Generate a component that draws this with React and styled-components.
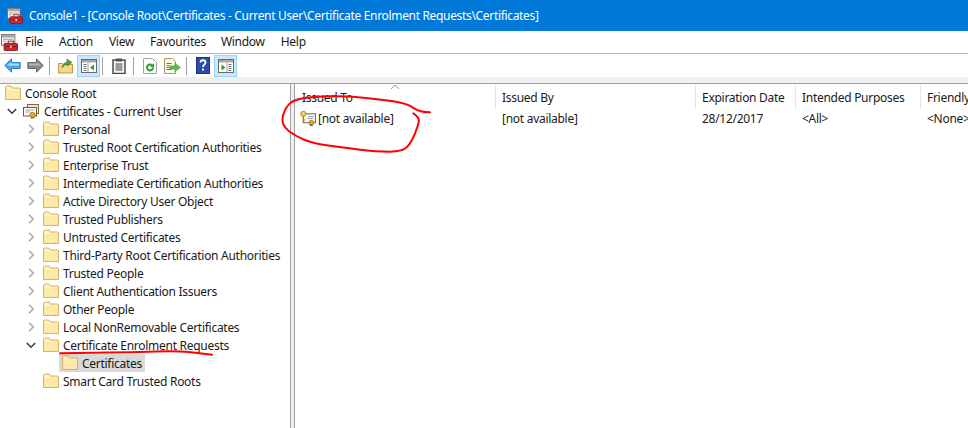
import React from "react";
import styled, { createGlobalStyle } from "styled-components";

const Global = createGlobalStyle`
  html, body { margin: 0; padding: 0; background: #fff; }
  body { font-family: "Noto Sans", "Open Sans", sans-serif; font-size: 12px; letter-spacing: -0.28px; color: #1a1a1a; }
`;
const Window = styled.div`
  position: relative; width: 968px; height: 428px; overflow: hidden;
  display: flex; flex-direction: column; background: #fff;
`;
const TitleBar = styled.div`
  height: 31px; background: #0078d7; color: #fff; display: flex; align-items: center;
  padding-left: 7px; gap: 6px; flex: none; letter-spacing: -0.33px;
`;
const MenuBar = styled.div`
  height: 22px; display: flex; align-items: center; flex: none; box-sizing: content-box;
  border-bottom: 1px solid #b4b4bc; background: #fff;
`;
const MenuIcon = styled.div` width: 25px; padding-left: 1px; display: flex; box-sizing: border-box; `;
const MenuItem = styled.span` margin-right: ${p => p.$gap}px; position: relative; top: -1px; `;
const Toolbar = styled.div`
  height: 23px; display: flex; align-items: center; padding-left: 1px; flex: none; background: #fff;
`;
const ToolButton = styled.div`
  width: 23px; height: 22px; display: flex; align-items: center; justify-content: center;
  box-sizing: border-box; flex: none;
  ${p => p.$active && "background: #cce8ff; border: 1px solid #99d1ff;"}
`;
const ToolSep = styled.div` width: 1px; height: 18px; background: #a0a0a0; margin: 0 ${p => p.$r}px 0 ${p => p.$l}px; flex: none; `;
const Strip = styled.div` height: 6px; background: #f0f0f0; flex: none; border-bottom: 1px solid #a0a0a0; `;
const Panes = styled.div` flex: 1; display: flex; min-height: 0; `;
const TreePane = styled.div`
  width: 291px; flex: none; border-right: 1px solid #a0a0a0; box-sizing: border-box;
`;
const Splitter = styled.div` width: 3px; background: #f0f0f0; flex: none; `;
const ListPane = styled.div` flex: 1; border-left: 1px solid #a0a0a0; min-width: 0; overflow: hidden; `;
const TreeRow = styled.div`
  height: 18px; display: flex; align-items: center; padding-left: ${p => p.$indent}px; white-space: nowrap;
`;
const Twisty = styled.div`
  width: 17px; height: 18px; margin-right: ${p => p.$gap}px;
  display: flex; align-items: center; justify-content: center; flex: none;
`;
const NodeIcon = styled.div` width: 16px; height: 16px; flex: none; margin-right: ${p => p.$gap}px; display: flex; `;
const SelectedNode = styled.div`
  display: flex; align-items: center; height: 18px; width: 86px; background: #d9d9d9; padding-left: 3px; box-sizing: border-box;
`;
const ColGrid = styled.div`
  display: grid; grid-template-columns: 201px 200px 100px 125px 60px; width: 673px;
`;
const HeaderCell = styled.div`
  height: 25px; display: flex; align-items: center; box-sizing: border-box; padding: 1px 0 0 ${p => p.$pad || 6}px;
  border-right: 1px solid #e5e5e5; white-space: nowrap; position: relative; overflow: hidden;
`;
const DataCell = styled.div`
  height: 18px; display: flex; align-items: center; padding-left: ${p => p.$pad || 6}px; white-space: nowrap; overflow: hidden;
`;
const Overlay = styled.svg` position: absolute; left: 0; top: 0; pointer-events: none; `;
const SortArrow = styled.svg` position: absolute; left: 95px; top: 0; `;

const Folder = () => (
  <svg width="16" height="16" viewBox="0 0 16 16">
    <path d="M.5 14.500V2l1-1h4.500l1.500 2h7.500l.5.5v11z" fill="#fbe5a0" stroke="#d3b56c" />
    <path d="M1.500 2h4.200l1.300 2h7v1H1.500z" fill="#fdf3cc" />
    <path d="M1.500 5.500h13v8h-13z" fill="#fce9ab" />
  </svg>
);
const Chevron = ({ open }) => (
  <svg width="10" height="10" viewBox="0 0 10 10">
    {open
      ? <path d="M.8 3l4.200 4.200L9.200 3" fill="none" stroke="#404040" strokeWidth="1.600" />
      : <path d="M3 .8L7.200 5 3 9.200" fill="none" stroke="#a6a6a6" strokeWidth="1.500" />}
  </svg>
);
const CertStore = () => (
  <svg width="16" height="16" viewBox="0 0 16 16">
    <rect x="4.500" y="1.500" width="11" height="9" fill="#efe8d0" stroke="#7a6a48" />
    <rect x=".5" y="4.500" width="13" height="8.500" fill="#fffdf2" stroke="#6b5b3c" />
    <path d="M2.500 7h9M2.500 9h5" stroke="#8ca6c8" />
    <circle cx="9.500" cy="12" r="2.600" fill="#f0a818" stroke="#b47a10" />
    <path d="M8.300 14l-.5 2 1.700-1 1.700 1-.5-2" fill="#2a6fc0" />
  </svg>
);
const PendingCert = () => (
  <svg width="17" height="17" viewBox="0 0 17 17">
    <rect x="3.500" y="3.500" width="13" height="9.500" fill="#fbf8e8" stroke="#6b5b3c" />
    <path d="M8 6.500h7M8 8.500h6" stroke="#8ca6c8" />
    <circle cx="3.500" cy="3.500" r="2.700" fill="#f6d468" stroke="#a8841c" />
    <path d="M3.500 6v7M3.500 10h2M3.500 12.500h2" stroke="#a8841c" />
    <circle cx="12" cy="13" r="2.500" fill="#f0a818" stroke="#b47a10" />
    <path d="M10.800 15l-.3 2 1.500-.9 1.500.9-.3-2" fill="#2a6fc0" />
  </svg>
);
const SnapIn = ({ size }) => (
  <svg width={size} height={size} viewBox="0 0 19 19">
    <rect x=".5" y=".5" width="15" height="12" fill="#f4f4f4" stroke="#6a6a6a" />
    <rect x="1" y="1" width="14" height="3" fill="#a8a8a8" />
    <path d="M2.500 6h11M2.500 8h3" stroke="#9a9a9a" />
    <rect x="3.500" y="10.500" width="15" height="8" rx="1" fill="#d2262c" stroke="#8a1418" />
    <path d="M4 14h14" stroke="#8a1418" />
    <rect x="8" y="8" width="6" height="2.500" fill="#f4f4f4" stroke="#8a1418" />
    <rect x="10" y="13" width="2" height="2.500" fill="#f4d0d0" />
  </svg>
);
const ArrowLeft = () => (
  <svg width="17" height="15" viewBox="0 0 17 15">
    <path d="M.8 7.500L7.500.8v3.700h8.700v6H7.500v3.700z" fill="#4aa8ea" stroke="#2a82c8" strokeLinejoin="round" />
    <path d="M3 7.500l4-3.500v1.600h8v1.900z" fill="#a8def8" />
  </svg>
);
const ArrowRight = () => (
  <svg width="17" height="15" viewBox="0 0 17 15">
    <path d="M16.200 7.500L9.500.8v3.700H.8v6h8.700v3.700z" fill="#888" stroke="#6a6a6a" strokeLinejoin="round" />
    <path d="M14 7.500l-4-3.500v1.600H2v1.900z" fill="#b4b4b4" />
  </svg>
);
const UpFolder = () => (
  <svg width="15" height="17" viewBox="0 0 15 17">
    <path d="M.5 16V6.500h4l1 1h9V16z" fill="#f3d985" stroke="#b89a50" />
    <path d="M4 11c.3-3.500 2.500-5.500 5-6V2l5 3.500-5 3.500V7C7 7.500 5.500 9 4 11z" fill="#4ea24a" stroke="#2c7a2a" strokeWidth=".6" />
  </svg>
);
const Pane = ({ side }) => (
  <svg width="16" height="14" viewBox="0 0 16 14">
    <rect x=".5" y=".5" width="15" height="13" fill="#fff" stroke="#6a6a6a" />
    <rect x="1" y="1" width="14" height="2.500" fill="#a8a8a8" />
    {side === "left" ? (
      <>
        <path d="M2.500 5.500h3M2.500 7.500h3M2.500 9.500h3M2.500 11.500h3" stroke="#707070" />
        <path d="M7 4v9" stroke="#a0a0a0" />
        <path d="M13 5.500v6L9 8.500z" fill="#2e9a3a" />
      </>
    ) : (
      <>
        <path d="M10.500 5.500h3M10.500 7.500h3M10.500 9.500h3M10.500 11.500h3" stroke="#707070" />
        <path d="M9 4v9" stroke="#a0a0a0" />
        <path d="M3.500 5.500v6l4-3z" fill="#2e9a3a" />
      </>
    )}
  </svg>
);
const Clipboard = () => (
  <svg width="14" height="16" viewBox="0 0 14 16">
    <rect x="1" y="2" width="12" height="13.500" fill="#f6f6f6" stroke="#404040" strokeWidth="1.400" />
    <rect x="4" y=".5" width="6" height="3" fill="#505050" />
    <path d="M3.500 6h7M3.500 8h7M3.500 10h7M3.500 12h7" stroke="#404040" />
  </svg>
);
const Refresh = () => (
  <svg width="14" height="16" viewBox="0 0 14 16">
    <path d="M.5.5h9l4 4v11H.500z" fill="#fcfcfc" stroke="#a0a0a0" />
    <path d="M10 9.500a3 3 0 1 1-1-2.300" fill="none" stroke="#2e9a3a" strokeWidth="2" />
    <path d="M11 5v4H7z" fill="#2e9a3a" />
  </svg>
);
const Export = () => (
  <svg width="17" height="16" viewBox="0 0 17 16">
    <path d="M.5.5h8l3 3v12h-11z" fill="#fbf8e6" stroke="#a89a70" />
    <path d="M2.500 5.500h5M2.500 7.500h3M2.500 9.500h3M2.500 11.500h5" stroke="#707070" />
    <path d="M6 8h5V5.500L16.500 9.500 11 13.500V11H6z" fill="#62c040" stroke="#3c962a" strokeWidth=".6" />
  </svg>
);
const Help = () => (
  <svg width="14" height="17" viewBox="0 0 14 17">
    <rect width="14" height="17" fill="#2c4aa8" />
    <rect x=".5" y=".5" width="13" height="16" fill="none" stroke="#1c3080" />
    <path d="M4.500 5.500c0-3 5-3 5 0 0 2-2.500 2-2.500 4.500" fill="none" stroke="#fff" strokeWidth="1.800" />
    <rect x="6" y="11.500" width="2" height="2" fill="#fff" />
  </svg>
);

const smooth = pts => {
  let d = `M${pts[0][0]} ${pts[0][1]}`;
  for (let i = 1; i < pts.length - 1; i++) {
    const mx = (pts[i][0] + pts[i + 1][0]) / 2;
    const my = (pts[i][1] + pts[i + 1][1]) / 2;
    d += `Q${pts[i][0]} ${pts[i][1]} ${mx} ${my}`;
  }
  const last = pts[pts.length - 1];
  return `${d}L${last[0]} ${last[1]}`;
};
const circleStroke = [[430, 112.3], [420, 112.3], [406.7, 103.3], [380, 99.3], [346.7, 96], [313, 96.7], [293.3, 100], [285, 108.3], [281.7, 120], [285, 128.3], [296.7, 136.7], [313, 143.3], [340, 147.3], [376.7, 151.7], [403, 151.7], [411.7, 141.7], [418.3, 125], [419.3, 118.3], [413.3, 113.3]];
const underline = [[60, 353.3], [133, 352.3], [176.7, 350.7], [200, 353.3], [212, 354.7]];

const nodes = [
  "Personal", "Trusted Root Certification Authorities", "Enterprise Trust",
  "Intermediate Certification Authorities", "Active Directory User Object",
  "Trusted Publishers", "Untrusted Certificates", "Third-Party Root Certification Authorities",
  "Trusted People", "Client Authentication Issuers", "Other People", "Local NonRemovable Certificates",
];
const menu = [["File", 16], ["Action", 16], ["View", 16], ["Favourites", 15], ["Window", 16], ["Help", 0]];

export default function App() {
  return (
    <Window>
      <Global />
      <TitleBar>
        <SnapIn size={16} />
        <span>Console1 - [Console Root\Certificates - Current User\Certificate Enrolment Requests\Certificates]</span>
      </TitleBar>
      <MenuBar>
        <MenuIcon><SnapIn size={17} /></MenuIcon>
        {menu.map(([m, g]) => <MenuItem key={m} $gap={g}>{m}</MenuItem>)}
      </MenuBar>
      <Toolbar>
        <ToolButton><ArrowLeft /></ToolButton>
        <ToolButton><ArrowRight /></ToolButton>
        <ToolSep $l={2} $r={4} />
        <ToolButton><UpFolder /></ToolButton>
        <ToolButton $active><Pane side="left" /></ToolButton>
        <ToolSep $l={2} $r={4} />
        <ToolButton><Clipboard /></ToolButton>
        <ToolSep $l={3} $r={4} />
        <ToolButton><Refresh /></ToolButton>
        <ToolButton><Export /></ToolButton>
        <ToolSep $l={2} $r={4} />
        <ToolButton><Help /></ToolButton>
        <ToolButton $active><Pane side="right" /></ToolButton>
      </Toolbar>
      <Strip />
      <Panes>
        <TreePane>
          <TreeRow $indent={5}><NodeIcon $gap={4}><Folder /></NodeIcon><span>Console Root</span></TreeRow>
          <TreeRow $indent={3}><Twisty $gap={3}><Chevron open /></Twisty><NodeIcon $gap={5}><CertStore /></NodeIcon><span>Certificates - Current User</span></TreeRow>
          {nodes.map(n => (
            <TreeRow key={n} $indent={22}><Twisty $gap={4}><Chevron /></Twisty><NodeIcon $gap={4}><Folder /></NodeIcon><span>{n}</span></TreeRow>
          ))}
          <TreeRow $indent={22}><Twisty $gap={4}><Chevron open /></Twisty><NodeIcon $gap={4}><Folder /></NodeIcon><span>Certificate Enrolment Requests</span></TreeRow>
          <TreeRow $indent={59}><SelectedNode><NodeIcon $gap={4}><Folder /></NodeIcon><span>Certificates</span></SelectedNode></TreeRow>
          <TreeRow $indent={43}><NodeIcon $gap={4}><Folder /></NodeIcon><span>Smart Card Trusted Roots</span></TreeRow>
        </TreePane>
        <Splitter />
        <ListPane>
          <ColGrid>
            <HeaderCell $pad={7}>Issued To<SortArrow width="10" height="6" viewBox="0 0 10 6"><path d="M1 5l4-4 4 4" fill="none" stroke="#9a9a9a" /></SortArrow></HeaderCell>
            <HeaderCell>Issued By</HeaderCell>
            <HeaderCell>Expiration Date</HeaderCell>
            <HeaderCell>Intended Purposes</HeaderCell>
            <HeaderCell>Friendly Name</HeaderCell>
            <DataCell $pad={5}><NodeIcon $gap={2}><PendingCert /></NodeIcon>[not available]</DataCell>
            <DataCell>[not available]</DataCell>
            <DataCell>28/12/2017</DataCell>
            <DataCell>&lt;All&gt;</DataCell>
            <DataCell>&lt;None&gt;</DataCell>
          </ColGrid>
        </ListPane>
      </Panes>
      <Overlay width="968" height="428" viewBox="0 0 968 428" fill="none" stroke="#f00" strokeWidth="2" strokeLinecap="round" strokeLinejoin="round">
        <path d={smooth(circleStroke)} />
        <path d={smooth(underline)} />
      </Overlay>
    </Window>
  );
}
